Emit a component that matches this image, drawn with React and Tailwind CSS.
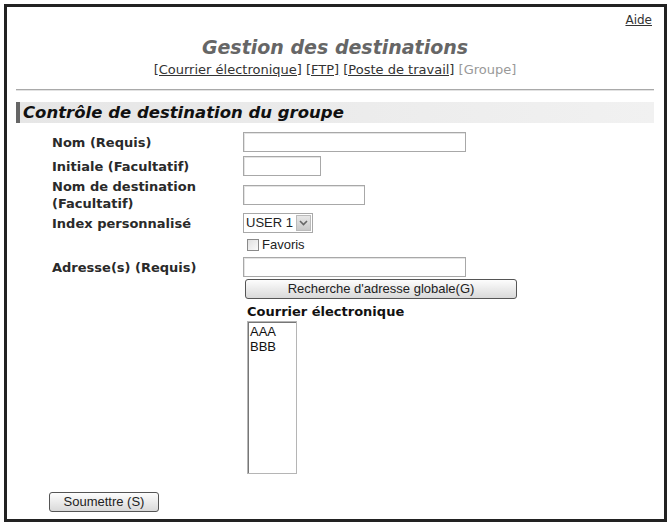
import React from "react";

const fieldFont = { fontFamily: '"Liberation Sans", Arial, sans-serif' };

const TextBox = ({ width }) => (
  <div className={`h-[20px] ${width} border border-[#a8a8a8] bg-white shadow-[inset_1px_1px_0_#e4e4e4]`}></div>
);

const Label = ({ children }) => (
  <div className="w-[227px] shrink-0 pl-[36px] text-[13px] font-bold leading-[17px] text-[#2a2a2a]">
    {children}
  </div>
);

const Button = ({ width, children }) => (
  <button
    style={fieldFont}
    className={`h-[20px] ${width} rounded-[3px] border border-[#555] bg-gradient-to-b from-[#fdfdfd] to-[#d9d9d9] text-[13px] leading-[18px] text-[#222]`}
  >
    {children}
  </button>
);

export default function App() {
  return (
    <div
      className="bg-white w-[668px] h-[523px] pt-[4px] pl-[4px]"
      style={{ fontFamily: '"DejaVu Sans", Verdana, sans-serif' }}
    >
      <div className="w-[663px] h-[518px] border-[3px] border-[#222] flex flex-col pl-[9px] pr-[10px]">
        {/* help link */}
        <div className="mt-[6px] h-[14px] text-right pr-[2px] text-[12px] leading-[14px] text-[#333]">
          <span className="underline">Aide</span>
        </div>

        {/* page title + tabs */}
        <div className="mt-[8px] text-center text-[19px] leading-[24px] font-bold italic text-[#666]">
          Gestion des destinations
        </div>
        <div className="mt-[3px] text-center text-[13px] leading-[16px] text-[#333]">
          <span className="underline">[Courrier électronique]</span>{" "}
          <span className="underline">[FTP]</span>{" "}
          <span className="underline">[Poste de travail]</span>{" "}
          <span className="text-[#999]">[Groupe]</span>
        </div>

        <div className="mt-[11px] h-[2px] border-t border-[#a9a9a9] border-b border-b-[#e2e2e2]"></div>

        {/* section heading */}
        <div className="mt-[11px] h-[21px] flex items-stretch bg-gradient-to-r from-[#e6e6e6] to-[#f1f1f1]">
          <div className="w-[4px] bg-[#666]"></div>
          <div className="pl-[3px] text-[16.5px] leading-[21px] font-bold italic text-[#111]">
            Contrôle de destination du groupe
          </div>
        </div>

        {/* form rows */}
        <div className="mt-[9px] flex items-center h-[20px]">
          <Label>Nom (Requis)</Label>
          <TextBox width="w-[223px]" />
        </div>
        <div className="mt-[4px] flex items-center h-[20px]">
          <Label>Initiale (Facultatif)</Label>
          <TextBox width="w-[78px]" />
        </div>
        <div className="mt-[2px] flex items-center h-[34px]">
          <Label>
            Nom de destination
            <br />
            (Facultatif)
          </Label>
          <TextBox width="w-[122px]" />
        </div>
        <div className="mt-[1px] flex items-center h-[20px]">
          <Label>Index personnalisé</Label>
          <div
            style={fieldFont}
            className="h-[20px] w-[70px] border border-[#a8a8a8] bg-white flex items-center justify-between pl-[2px] pr-[1px] text-[13px] text-[#222]"
          >
            <span>USER 1</span>
            <span className="w-[15px] h-[16px] bg-gradient-to-b from-[#e8e8e8] to-[#c8c8c8] border border-[#bbb] flex items-center justify-center">
              <svg width="9" height="6" viewBox="0 0 9 6">
                <path d="M1 1 L4.5 4.5 L8 1" fill="none" stroke="#666" strokeWidth="1.6" />
              </svg>
            </span>
          </div>
        </div>
        <div className="mt-[5px] flex items-center h-[14px]">
          <div className="w-[227px] shrink-0"></div>
          <div style={fieldFont} className="flex items-center pl-[4px] text-[13px] text-[#222]">
            <span className="w-[12px] h-[12px] border border-[#8a8a8a] bg-gradient-to-br from-[#e0e0e0] to-[#fafafa]"></span>
            <span className="ml-[3px] leading-[14px]">Favoris</span>
          </div>
        </div>
        <div className="mt-[5px] flex items-center h-[20px]">
          <Label>Adresse(s) (Requis)</Label>
          <TextBox width="w-[223px]" />
        </div>
        <div className="mt-[2px] flex h-[20px]">
          <div className="w-[229px] shrink-0"></div>
          <Button width="w-[272px]">Recherche d'adresse globale(G)</Button>
        </div>
        <div className="mt-[5px] flex">
          <div className="w-[231px] shrink-0"></div>
          <div className="text-[13px] font-bold leading-[16px] text-[#111]">Courrier électronique</div>
        </div>
        <div className="mt-[1px] flex">
          <div className="w-[231px] shrink-0"></div>
          <div
            style={fieldFont}
            className="w-[50px] h-[153px] border border-[#b5b5b5] shadow-[inset_1px_1px_0_#777] bg-white pl-[2px] pt-[2px] text-[13px] leading-[15px] text-[#111]"
          >
            <div>AAA</div>
            <div>BBB</div>
          </div>
        </div>

        <div className="mt-[15px] pl-[33px]">
          <Button width="w-[110px]">Soumettre (S)</Button>
        </div>
      </div>
    </div>
  );
}
